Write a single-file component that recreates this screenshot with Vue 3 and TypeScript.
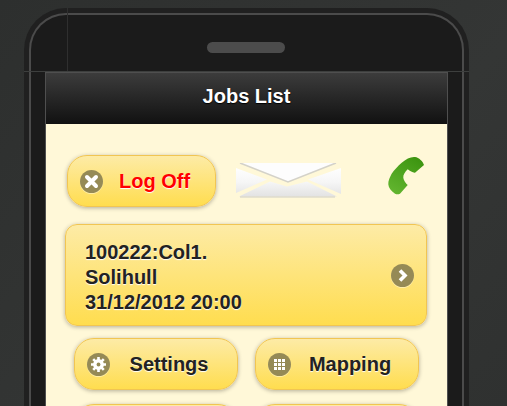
<script setup lang="ts">
type NavButton = {
  id: string
  label: string
  icon?: 'gear' | 'grid'
}

const navButtons: NavButton[] = [
  { id: 'settings', label: 'Settings', icon: 'gear' },
  { id: 'mapping', label: 'Mapping', icon: 'grid' },
  { id: 'next-left', label: '' },
  { id: 'next-right', label: '' },
]

const jobLines = ['100222:Col1.', 'Solihull', '31/12/2012 20:00']
const gridDots = [6, 10, 14]
</script>

<template>
  <div class="page">
    <div class="phone">
      <div class="bezel">
        <div class="speaker"></div>
        <div class="screen">
          <header class="title-bar">Jobs List</header>
          <main class="content">
            <section class="top-row">
              <button class="btn logoff">
                <span class="icon">
                  <svg viewBox="0 0 23 23" width="23" height="23">
                    <path d="M7 7l9 9M16 7l-9 9" stroke="#fff" stroke-width="4" stroke-linecap="round" />
                  </svg>
                </span>
                <span class="label">Log Off</span>
              </button>

              <svg class="envelope" viewBox="0 0 105 35" width="105" height="35">
                <defs>
                  <linearGradient id="env" gradientUnits="userSpaceOnUse" x1="0" y1="4" x2="0" y2="34">
                    <stop offset="0" stop-color="#ffffff" />
                    <stop offset="0.5" stop-color="#f6f6f6" />
                    <stop offset="1" stop-color="#e2e2e2" />
                  </linearGradient>
                </defs>
                <path d="M4 0H100L52 19Z" fill="#fdfdfd" />
                <path d="M4 0L52 19L100 0" fill="none" stroke="#d4d2c9" stroke-width="1.6" />
                <path d="M0 5L31 16.5L0 30Z" fill="url(#env)" />
                <path d="M105 5L72 16.5L105 31Z" fill="url(#env)" />
                <path d="M3 33.5L34 18.5L51 23.5L71 18.5L101 33.5Z" fill="url(#env)" />
                <path d="M4 34H99" stroke="#cfcec6" stroke-width="1.2" />
              </svg>

              <svg class="call" viewBox="0 0 36 39" width="36" height="39">
                <defs>
                  <linearGradient id="handset" x1="0.8" y1="0" x2="0.2" y2="1">
                    <stop offset="0" stop-color="#3c9410" />
                    <stop offset="1" stop-color="#62b52f" />
                  </linearGradient>
                </defs>
                <path
                  d="M13.7 6.7C18 3 23 .5 27 1C31 1.5 35 5.5 36 9L27 16.7C25 17 22 15 19.7 13.3C17 16 15 19 15.3 21.7C15.5 24 17.5 27 19.7 29L12 37.7C10.5 38.5 8.5 38.5 7 37.7C3 35 .5 31.5 .3 28.3C0 25 2 21 3.5 18C6 14 10 10 13.7 6.7Z"
                  fill="url(#handset)"
                />
              </svg>
            </section>

            <article class="job">
              <div class="job-text">
                <div v-for="line in jobLines" :key="line">{{ line }}</div>
              </div>
              <span class="icon">
                <svg viewBox="0 0 23 23" width="23" height="23">
                  <path d="M9 6.5l5 5-5 5" fill="none" stroke="#fff" stroke-width="3.6" />
                </svg>
              </span>
            </article>

            <section class="nav-grid">
              <button v-for="item in navButtons" :key="item.id" class="btn">
                <span class="icon">
                  <svg v-if="item.icon === 'gear'" viewBox="0 0 23 23" width="23" height="23">
                    <circle cx="11.5" cy="11.5" r="5.4" fill="#fff" />
                    <path
                      d="M11.5 4v15M4 11.5h15M6.2 6.2l10.6 10.6M16.8 6.2L6.2 16.8"
                      stroke="#fff"
                      stroke-width="2.6"
                    />
                    <circle cx="11.5" cy="11.5" r="1.9" fill="#958a56" />
                  </svg>
                  <svg v-else-if="item.icon === 'grid'" viewBox="0 0 23 23" width="23" height="23">
                    <template v-for="y in gridDots" :key="y">
                      <rect v-for="x in gridDots" :key="x" :x="x" :y="y" width="3" height="3" fill="#fff" />
                    </template>
                  </svg>
                </span>
                <span class="label">{{ item.label }}</span>
              </button>
            </section>
          </main>
        </div>
      </div>
    </div>
  </div>
</template>

<style scoped>
.page {
  height: 406px;
  overflow: hidden;
  box-sizing: border-box;
  padding: 8px 0 0 24px;
  background: linear-gradient(135deg, #2d2f2e 0%, #343635 60%, #2f3130 100%);
  font-family: "Liberation Sans", Arial, sans-serif;
}

.phone {
  position: relative;
  width: 445px;
  height: 500px;
  box-sizing: border-box;
  padding: 5px 5px 0;
  background: #202020;
  border-radius: 42px 42px 0 0;
}

/* thin seams on the shell */
.phone::before {
  content: "";
  position: absolute;
  left: 0;
  right: 0;
  top: 63px;
  height: 1px;
  background: #3d3f3e;
}

.phone::after {
  content: "";
  position: absolute;
  left: 43px;
  top: 0;
  width: 1px;
  height: 63px;
  background: #2f2f2f;
}

.bezel {
  height: 100%;
  box-sizing: border-box;
  padding-top: 27px;
  background: #1b1b1b;
  border: 2px solid #4b4b4b;
  border-bottom: none;
  border-radius: 37px 37px 0 0;
}

.speaker {
  width: 78px;
  height: 11px;
  margin: 0 0 19px 176px;
  border-radius: 6px;
  background: #4c4c4c;
}

.screen {
  position: relative;
  z-index: 1;
  margin: 0 14px;
  border: 1px solid #4f4f4f;
  border-bottom: none;
}

.title-bar {
  height: 51px;
  line-height: 47px;
  text-align: center;
  font-size: 20px;
  font-weight: 700;
  color: #fff;
  text-shadow: 0 1px 1px #000;
  background: linear-gradient(#3c3c3c, #111);
}

.content {
  padding: 31px 19px 30px;
  height: 400px;
  background: #fff8d8;
}

.top-row {
  display: flex;
  align-items: flex-start;
  margin-left: 2px;
}

.btn {
  display: grid;
  grid-template-columns: 46px 1fr 20px;
  align-items: center;
  padding: 0;
  height: 52px;
  box-sizing: border-box;
  border: 1px solid #f1c552;
  border-radius: 20px;
  background: linear-gradient(#fdeba6, #ffdd4f);
  box-shadow: 0 1px 4px rgba(0, 0, 0, 0.3);
  font-family: inherit;
  font-size: 20px;
  font-weight: 700;
  color: #222;
  text-shadow: 0 1px 1px #fff;
}

.btn .label {
  grid-column: 2;
  text-align: center;
}

.btn .icon {
  grid-column: 1;
  margin-left: 12px;
}

.logoff {
  width: 149px;
  flex: none;
  color: #f00;
}

.icon {
  display: block;
  flex: none;
  width: 23px;
  height: 23px;
  border-radius: 50%;
  background: #958a56;
  box-shadow: 0 1px 0 rgba(255, 255, 255, 0.4);
}

.icon svg {
  display: block;
}

.envelope {
  flex: none;
  margin: 8px 0 0 20px;
}

.call {
  flex: none;
  margin: 1px 0 0 47px;
}

.job {
  display: flex;
  align-items: center;
  justify-content: space-between;
  height: 102px;
  box-sizing: border-box;
  margin-top: 17px;
  padding: 0 12px 0 19px;
  width: 362px;
  border: 1px solid #f1c552;
  border-radius: 12px;
  background: linear-gradient(#fdeba6, #ffdd4f);
  box-shadow: 0 1px 4px rgba(0, 0, 0, 0.3);
  font-size: 20px;
  font-weight: 700;
  line-height: 25px;
  color: #222;
  text-shadow: 0 1px 1px #fff;
}

.job-text {
  padding-top: 4px;
}

.nav-grid {
  display: grid;
  grid-template-columns: 164px 164px;
  gap: 14px 17px;
  margin: 12px 0 0 9px;
}
</style>

<style>
html,
body {
  margin: 0;
  overflow: hidden;
}
</style>
